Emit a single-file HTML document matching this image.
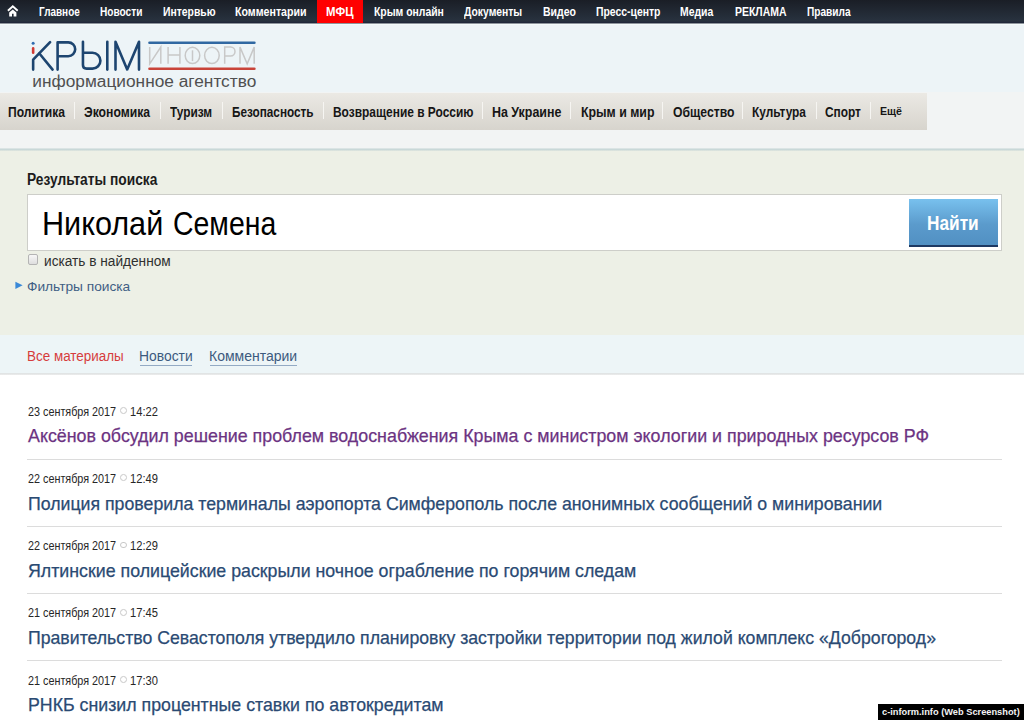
<!DOCTYPE html>
<html><head><meta charset="utf-8">
<style>
*{margin:0;padding:0;box-sizing:border-box}
html,body{width:1024px;height:720px;overflow:hidden;background:#fff;font-family:"Liberation Sans",sans-serif}
.abs{position:absolute}
.t{position:absolute;white-space:nowrap}
</style></head><body>
<div class="abs" style="left:0;top:0;width:1024px;height:23px;background:linear-gradient(#1a1e26,#28323f 92%,#20283a 96%)"></div>
<div class="abs" style="left:0;top:23px;width:1024px;height:1px;background:#8e959d"></div>
<div class="abs" style="left:0;top:24px;width:1024px;height:1px;background:#f3fafa"></div>
<div class="abs" style="left:317px;top:0;width:46px;height:23px;background:#ff0000"></div>
<svg class="abs" style="left:0;top:0" width="30" height="23" viewBox="0 0 30 23">
<path d="M7.9 10.7 L12.8 6.2 L17.7 10.7" fill="none" stroke="#fff" stroke-width="1.9" stroke-linecap="butt"/>
<path d="M9.2 12.5 L12.8 9.5 L16.4 12.5 L16.4 16.6 L13.6 16.6 L13.6 13.7 L12.0 13.7 L12.0 16.6 L9.2 16.6 Z" fill="#fff"/>
</svg>
<div class="t" style="left:39.27px;top:3.84px;font-size:12px;line-height:17px;font-weight:700;color:#fff;transform:scaleX(0.8292);transform-origin:0 0;">Главное</div>
<div class="t" style="left:100.26px;top:3.84px;font-size:12px;line-height:17px;font-weight:700;color:#fff;transform:scaleX(0.8429);transform-origin:0 0;">Новости</div>
<div class="t" style="left:163.14px;top:3.84px;font-size:12px;line-height:17px;font-weight:700;color:#fff;transform:scaleX(0.8644);transform-origin:0 0;">Интервью</div>
<div class="t" style="left:235.01px;top:3.84px;font-size:12px;line-height:17px;font-weight:700;color:#fff;transform:scaleX(0.8861);transform-origin:0 0;">Комментарии</div>
<div class="t" style="left:325.85px;top:3.84px;font-size:12px;line-height:17px;font-weight:700;color:#fff;transform:scaleX(0.9464);transform-origin:0 0;">МФЦ</div>
<div class="t" style="left:374.03px;top:3.84px;font-size:12px;line-height:17px;font-weight:700;color:#fff;transform:scaleX(0.8671);transform-origin:0 0;">Крым онлайн</div>
<div class="t" style="left:463.84px;top:3.84px;font-size:12px;line-height:17px;font-weight:700;color:#fff;transform:scaleX(0.8627);transform-origin:0 0;">Документы</div>
<div class="t" style="left:543.12px;top:3.84px;font-size:12px;line-height:17px;font-weight:700;color:#fff;transform:scaleX(0.8750);transform-origin:0 0;">Видео</div>
<div class="t" style="left:596.03px;top:3.84px;font-size:12px;line-height:17px;font-weight:700;color:#fff;transform:scaleX(0.8671);transform-origin:0 0;">Пресс-центр</div>
<div class="t" style="left:680.43px;top:3.84px;font-size:12px;line-height:17px;font-weight:700;color:#fff;transform:scaleX(0.8658);transform-origin:0 0;">Медиа</div>
<div class="t" style="left:735.23px;top:3.84px;font-size:12px;line-height:17px;font-weight:700;color:#fff;transform:scaleX(0.8724);transform-origin:0 0;">РЕКЛАМА</div>
<div class="t" style="left:806.96px;top:3.84px;font-size:12px;line-height:17px;font-weight:700;color:#fff;transform:scaleX(0.8431);transform-origin:0 0;">Правила</div>
<div class="abs" style="left:0;top:25px;width:1024px;height:67px;background:#edf4f7"></div>
<svg class="abs" style="left:0;top:23px" width="270" height="69" viewBox="0 23 270 69">
<g fill="none" stroke="#1d4570" stroke-width="2.6" stroke-linecap="round" stroke-linejoin="round">
<path d="M33.15 69.6 L33.15 59.7 L50.1 42.1"/>
<path d="M39.4 53.5 L52.6 69.6"/>
<path d="M57.6 69.6 L57.6 42.4 L68.3 42.4 A6.9 6.9 0 0 1 68.3 56.2 L57.6 56.2"/>
<path d="M82.95 41.8 L82.95 65 Q82.95 68.6 86.5 68.6 L92.5 68.6 A7.9 7.9 0 0 0 92.5 52.8 L82.95 52.8"/>
<path d="M107.3 41.8 L107.3 69.6"/>
<path d="M115.5 69.6 L115.5 41.8 L127.2 69.4 L139 41.8 L139 69.6"/>
</g>
<circle cx="33.15" cy="43.15" r="1.5" fill="#2f6cb0"/>
<path d="M33.15 48.4 L33.15 52.8" stroke="#d03a33" stroke-width="2.6" stroke-linecap="round"/>
<path d="M149.5 42.8 L254.4 42.8" stroke="#3068a2" stroke-width="2.6" stroke-linecap="round"/>
<path d="M149.5 68.75 L254.4 68.75" stroke="#c9443a" stroke-width="2.6" stroke-linecap="round"/>
<g fill="none" stroke="#c8c8c8" stroke-width="1.5">
<path d="M149.7 47.1 L149.7 63.8 L160.8 47.1 L160.8 63.8"/>
<path d="M168.1 47.1 L168.1 63.8 M179.9 47.1 L179.9 63.8 M168.1 55 L179.9 55"/>
<ellipse cx="192.5" cy="55.4" rx="7.3" ry="8.1"/>
<path d="M192.5 50.3 L192.5 61.1"/>
<ellipse cx="211.9" cy="55.4" rx="7.3" ry="8.1"/>
<path d="M224.7 63.8 L224.7 47.1 L230.6 47.1 A4.4 4.4 0 0 1 230.6 55.9 L224.7 55.9"/>
<path d="M240 63.8 L240 47.1 L247.2 63.8 L254.2 47.1 L254.2 63.8"/>
</g>
</svg>
<div class="t" style="left:32.30px;top:69.71px;font-size:17.3px;line-height:23px;font-weight:400;color:#505050;">информационное агентство</div>
<div class="abs" style="left:0;top:92px;width:1024px;height:56px;background:#f2f4f4"></div>
<div class="abs" style="left:0;top:93px;width:927px;height:37px;background:linear-gradient(#ebe9e4,#d7d4cd)"></div>
<div class="t" style="left:7.84px;top:102.65px;font-size:14px;line-height:19px;font-weight:700;color:#161616;transform:scaleX(0.8646);transform-origin:0 0;">Политика</div>
<div class="t" style="left:83.53px;top:102.65px;font-size:14px;line-height:19px;font-weight:700;color:#161616;transform:scaleX(0.8697);transform-origin:0 0;">Экономика</div>
<div class="t" style="left:170.25px;top:102.65px;font-size:14px;line-height:19px;font-weight:700;color:#161616;transform:scaleX(0.8469);transform-origin:0 0;">Туризм</div>
<div class="t" style="left:232.16px;top:102.65px;font-size:14px;line-height:19px;font-weight:700;color:#161616;transform:scaleX(0.8396);transform-origin:0 0;">Безопасность</div>
<div class="t" style="left:332.65px;top:102.65px;font-size:14px;line-height:19px;font-weight:700;color:#161616;transform:scaleX(0.8528);transform-origin:0 0;">Возвращение в Россию</div>
<div class="t" style="left:491.91px;top:102.65px;font-size:14px;line-height:19px;font-weight:700;color:#161616;transform:scaleX(0.8883);transform-origin:0 0;">На Украине</div>
<div class="t" style="left:580.52px;top:102.65px;font-size:14px;line-height:19px;font-weight:700;color:#161616;transform:scaleX(0.8817);transform-origin:0 0;">Крым и мир</div>
<div class="t" style="left:672.53px;top:102.65px;font-size:14px;line-height:19px;font-weight:700;color:#161616;transform:scaleX(0.8710);transform-origin:0 0;">Общество</div>
<div class="t" style="left:752.15px;top:102.65px;font-size:14px;line-height:19px;font-weight:700;color:#161616;transform:scaleX(0.8492);transform-origin:0 0;">Культура</div>
<div class="t" style="left:825.45px;top:102.65px;font-size:14px;line-height:19px;font-weight:700;color:#161616;transform:scaleX(0.8488);transform-origin:0 0;">Спорт</div>
<div class="t" style="left:879.80px;top:102.62px;font-size:11.5px;line-height:16px;font-weight:700;color:#161616;transform:scaleX(0.9227);transform-origin:0 0;">Ещё</div>
<div class="abs" style="left:74.0px;top:102px;width:1px;height:17px;background:#f6f5f2"></div>
<div class="abs" style="left:160.0px;top:102px;width:1px;height:17px;background:#f6f5f2"></div>
<div class="abs" style="left:221.7px;top:102px;width:1px;height:17px;background:#f6f5f2"></div>
<div class="abs" style="left:322.5px;top:102px;width:1px;height:17px;background:#f6f5f2"></div>
<div class="abs" style="left:481.7px;top:102px;width:1px;height:17px;background:#f6f5f2"></div>
<div class="abs" style="left:569.9px;top:102px;width:1px;height:17px;background:#f6f5f2"></div>
<div class="abs" style="left:662.4px;top:102px;width:1px;height:17px;background:#f6f5f2"></div>
<div class="abs" style="left:742.3px;top:102px;width:1px;height:17px;background:#f6f5f2"></div>
<div class="abs" style="left:815.6px;top:102px;width:1px;height:17px;background:#f6f5f2"></div>
<div class="abs" style="left:870.1px;top:102px;width:1px;height:17px;background:#f6f5f2"></div>
<div class="abs" style="left:0;top:148px;width:1024px;height:3px;background:linear-gradient(#e4eaea,#c9d8d8 50%,#e2e8e0)"></div>
<div class="abs" style="left:0;top:151px;width:1024px;height:184px;background:#edf0e6"></div>
<div class="t" style="left:27.44px;top:168.86px;font-size:16px;line-height:21px;font-weight:700;color:#1c1c1c;transform:scaleX(0.8589);transform-origin:0 0;">Результаты поиска</div>
<div class="abs" style="left:27px;top:194px;width:975px;height:57px;background:#fff;border:1px solid #cdcec9"></div>
<div class="t" style="left:41.70px;top:202.52px;font-size:34px;line-height:41px;font-weight:400;color:#000;transform:scaleX(0.9000);transform-origin:0 0;">Николай</div>
<div class="t" style="left:173.33px;top:202.52px;font-size:34px;line-height:41px;font-weight:400;color:#000;transform:scaleX(0.8360);transform-origin:0 0;">Семена</div>
<div class="abs" style="left:909px;top:199px;width:89px;height:48px;background:linear-gradient(#78c1ee,#5b9bcc 55%,#5190c3);border-bottom:2px solid #1e3963"></div>
<div class="t" style="left:927.44px;top:209.77px;font-size:20px;line-height:26px;font-weight:700;color:#fff;transform:scaleX(0.8620);transform-origin:0 0;">Найти</div>
<div class="abs" style="left:27.5px;top:254.3px;width:10.5px;height:10.5px;border:1px solid #b4b4b4;border-radius:2px;background:linear-gradient(#f7f7f7,#dedede)"></div>
<div class="t" style="left:44.00px;top:252.05px;font-size:14px;line-height:19px;font-weight:400;color:#2f2f2f;transform:scaleX(0.9760);transform-origin:0 0;">искать в найденном</div>
<svg class="abs" style="left:15px;top:281px" width="8" height="9" viewBox="0 0 8 9"><path d="M0.4 0.7 L7.6 4.3 L0.4 7.9 Z" fill="#3a89d8"/></svg>
<div class="t" style="left:27.00px;top:277.22px;font-size:13.5px;line-height:19px;font-weight:400;color:#3f5e84;transform:scaleX(1.0160);transform-origin:0 0;">Фильтры поиска</div>
<div class="abs" style="left:0;top:335px;width:1024px;height:38px;background:#edf5f7"></div>
<div class="abs" style="left:0;top:373px;width:1024px;height:2px;background:linear-gradient(#dde1e2,#ececec)"></div>
<div class="t" style="left:26.60px;top:346.65px;font-size:14px;line-height:19px;font-weight:400;color:#d63c3c;transform:scaleX(0.9600);transform-origin:0 0;">Все материалы</div>
<div class="t" style="left:138.90px;top:346.65px;font-size:14px;line-height:19px;font-weight:400;color:#3c5a7e;transform:scaleX(0.9900);transform-origin:0 0;">Новости</div>
<div class="t" style="left:209.00px;top:346.65px;font-size:14px;line-height:19px;font-weight:400;color:#3c5a7e;">Комментарии</div>
<div class="abs" style="left:140px;top:365px;width:52px;height:1px;background:#93aac4"></div>
<div class="abs" style="left:210px;top:365px;width:86.5px;height:1px;background:#93aac4"></div>
<div class="t" style="left:28.20px;top:403.54px;font-size:12px;line-height:17px;font-weight:400;color:#262626;transform:scaleX(0.9000);transform-origin:0 0;">23 сентября 2017</div>
<div class="abs" style="left:120.3px;top:407.00px;width:6.8px;height:6.8px;border:1.2px solid #c8c8c8;border-radius:50%"></div>
<div class="t" style="left:130.40px;top:403.54px;font-size:12px;line-height:17px;font-weight:400;color:#262626;transform:scaleX(0.9300);transform-origin:0 0;">14:22</div>
<div class="t" style="left:27.50px;top:424.29px;font-size:18.2px;line-height:24px;font-weight:400;color:#6c3382;transform:scaleX(0.9807);transform-origin:0 0;-webkit-text-stroke:0.25px #6c3382;">Аксёнов обсудил решение проблем водоснабжения Крыма с министром экологии и природных ресурсов РФ</div>
<div class="abs" style="left:27px;top:459px;width:975px;height:1px;background:#dcdcdc"></div>
<div class="t" style="left:28.20px;top:470.79px;font-size:12px;line-height:17px;font-weight:400;color:#262626;transform:scaleX(0.9000);transform-origin:0 0;">22 сентября 2017</div>
<div class="abs" style="left:120.3px;top:474.25px;width:6.8px;height:6.8px;border:1.2px solid #c8c8c8;border-radius:50%"></div>
<div class="t" style="left:130.40px;top:470.79px;font-size:12px;line-height:17px;font-weight:400;color:#262626;transform:scaleX(0.9300);transform-origin:0 0;">12:49</div>
<div class="t" style="left:27.50px;top:491.54px;font-size:18.2px;line-height:24px;font-weight:400;color:#2a4a73;transform:scaleX(0.9745);transform-origin:0 0;-webkit-text-stroke:0.25px #2a4a73;">Полиция проверила терминалы аэропорта Симферополь после анонимных сообщений о минировании</div>
<div class="abs" style="left:27px;top:526px;width:975px;height:1px;background:#dcdcdc"></div>
<div class="t" style="left:28.20px;top:538.04px;font-size:12px;line-height:17px;font-weight:400;color:#262626;transform:scaleX(0.9000);transform-origin:0 0;">22 сентября 2017</div>
<div class="abs" style="left:120.3px;top:541.50px;width:6.8px;height:6.8px;border:1.2px solid #c8c8c8;border-radius:50%"></div>
<div class="t" style="left:130.40px;top:538.04px;font-size:12px;line-height:17px;font-weight:400;color:#262626;transform:scaleX(0.9300);transform-origin:0 0;">12:29</div>
<div class="t" style="left:27.50px;top:558.79px;font-size:18.2px;line-height:24px;font-weight:400;color:#2a4a73;transform:scaleX(0.9774);transform-origin:0 0;-webkit-text-stroke:0.25px #2a4a73;">Ялтинские полицейские раскрыли ночное ограбление по горячим следам</div>
<div class="abs" style="left:27px;top:593px;width:975px;height:1px;background:#dcdcdc"></div>
<div class="t" style="left:28.20px;top:605.29px;font-size:12px;line-height:17px;font-weight:400;color:#262626;transform:scaleX(0.9000);transform-origin:0 0;">21 сентября 2017</div>
<div class="abs" style="left:120.3px;top:608.75px;width:6.8px;height:6.8px;border:1.2px solid #c8c8c8;border-radius:50%"></div>
<div class="t" style="left:130.40px;top:605.29px;font-size:12px;line-height:17px;font-weight:400;color:#262626;transform:scaleX(0.9300);transform-origin:0 0;">17:45</div>
<div class="t" style="left:27.50px;top:626.04px;font-size:18.2px;line-height:24px;font-weight:400;color:#2a4a73;transform:scaleX(0.9721);transform-origin:0 0;-webkit-text-stroke:0.25px #2a4a73;">Правительство Севастополя утвердило планировку застройки территории под жилой комплекс «Доброгород»</div>
<div class="abs" style="left:27px;top:660px;width:975px;height:1px;background:#dcdcdc"></div>
<div class="t" style="left:28.20px;top:672.54px;font-size:12px;line-height:17px;font-weight:400;color:#262626;transform:scaleX(0.9000);transform-origin:0 0;">21 сентября 2017</div>
<div class="abs" style="left:120.3px;top:676.00px;width:6.8px;height:6.8px;border:1.2px solid #c8c8c8;border-radius:50%"></div>
<div class="t" style="left:130.40px;top:672.54px;font-size:12px;line-height:17px;font-weight:400;color:#262626;transform:scaleX(0.9300);transform-origin:0 0;">17:30</div>
<div class="t" style="left:27.50px;top:693.29px;font-size:18.2px;line-height:24px;font-weight:400;color:#2a4a73;transform:scaleX(0.9766);transform-origin:0 0;-webkit-text-stroke:0.25px #2a4a73;">РНКБ снизил процентные ставки по автокредитам</div>
<div class="abs" style="left:878px;top:703.5px;width:146px;height:16.5px;background:#000"></div>
<div class="t" style="left:882.00px;top:704.71px;font-size:9.5px;line-height:14px;font-weight:700;color:#f4f4f4;transform:scaleX(0.9750);transform-origin:0 0;">c-inform.info (Web Screenshot)</div>
</body></html>
